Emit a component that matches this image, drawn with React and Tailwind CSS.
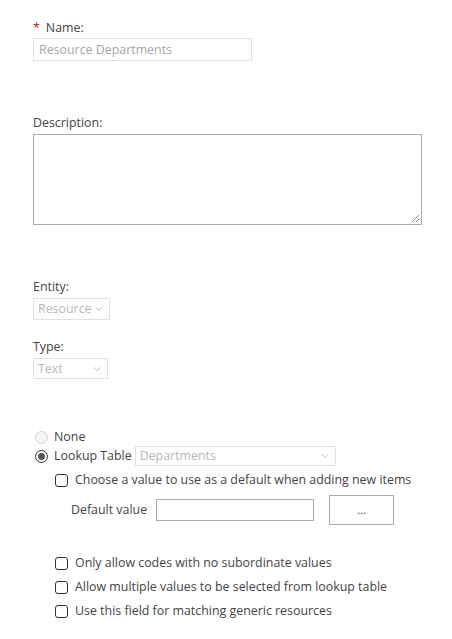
import { ChevronDown } from 'lucide-react'

function Checkbox({ label }) {
  return (
    <label className="flex h-[24px] items-center">
      <span className="h-[13px] w-[13px] rounded-[3px] border border-[#333]" />
      <span className="ml-[7px]">{label}</span>
    </label>
  )
}

function DisabledSelect({ value, className }) {
  return (
    <div className={`flex items-center justify-between border border-[#e1e1e1] pl-[4px] pr-[4px] text-[#b8b8b8] ${className}`}>
      <span>{value}</span>
      <ChevronDown size={12} strokeWidth={2} className="shrink-0 text-[#bbb]" />
    </div>
  )
}

export default function App() {
  return (
    <div className="min-h-[639px] bg-white pl-[33px] pt-[18px] text-[12.4px] leading-[16px] text-[#444]" style={{ fontFamily: '"Open Sans", "Noto Sans", sans-serif' }}>
      <div className="mt-[2px] flex h-[16px] items-center">
        <span className="text-[#a4262c]">*</span>
        <span className="ml-[6px]">Name:</span>
      </div>
      <div className="mt-[2px] flex h-[23px] w-[219px] items-center border border-[#e1e1e1] pl-[5px] text-[#a6a6a6]">
        Resource Departments
      </div>

      <div className="mt-[54px] h-[16px]">Description:</div>
      <div className="relative mt-[3px] h-[91px] w-[389px] border border-[#ababab]">
        <svg className="absolute bottom-[1px] right-[1px]" width="9" height="9" viewBox="0 0 9 9">
          <path d="M8 1L1 8M8 5L5 8" stroke="#888" strokeWidth="1" />
        </svg>
      </div>

      <div className="mt-[54px] h-[16px]">Entity:</div>
      <DisabledSelect value="Resource" className="mt-[3px] h-[22px] w-[77px]" />

      <div className="mt-[19px] h-[16px]">Type:</div>
      <DisabledSelect value="Text" className="mt-[3px] h-[21px] w-[75px]" />

      <div className="mt-[49px] flex h-[18px] items-center">
        <span className="ml-[2px] h-[13px] w-[13px] rounded-full border border-[#d0d0d0] bg-[#f5f5f5]" />
        <span className="ml-[6px]">None</span>
      </div>
      <div className="flex h-[20px] items-center">
        <span className="ml-[2px] flex h-[13px] w-[13px] items-center justify-center rounded-full border border-[#333]">
          <span className="h-[7px] w-[7px] rounded-full bg-[#555]" />
        </span>
        <span className="ml-[6px]">Lookup Table</span>
        <DisabledSelect value="Departments" className="ml-[3px] h-[20px] w-[201px]" />
      </div>

      <div className="ml-[22px] mt-[2px]">
        <Checkbox label="Choose a value to use as a default when adding new items" />
        <div className="mt-[3px] flex h-[30px] items-center">
          <span className="ml-[16px]">Default value</span>
          <div className="ml-[9px] h-[22px] w-[158px] border border-[#ababab]" />
          <div className="ml-[15px] flex h-[30px] w-[65px] items-center justify-center border border-[#ababab] text-[11px]">...</div>
        </div>
        <div className="mt-[26px]">
          <Checkbox label="Only allow codes with no subordinate values" />
          <Checkbox label="Allow multiple values to be selected from lookup table" />
          <Checkbox label="Use this field for matching generic resources" />
        </div>
      </div>
    </div>
  )
}
